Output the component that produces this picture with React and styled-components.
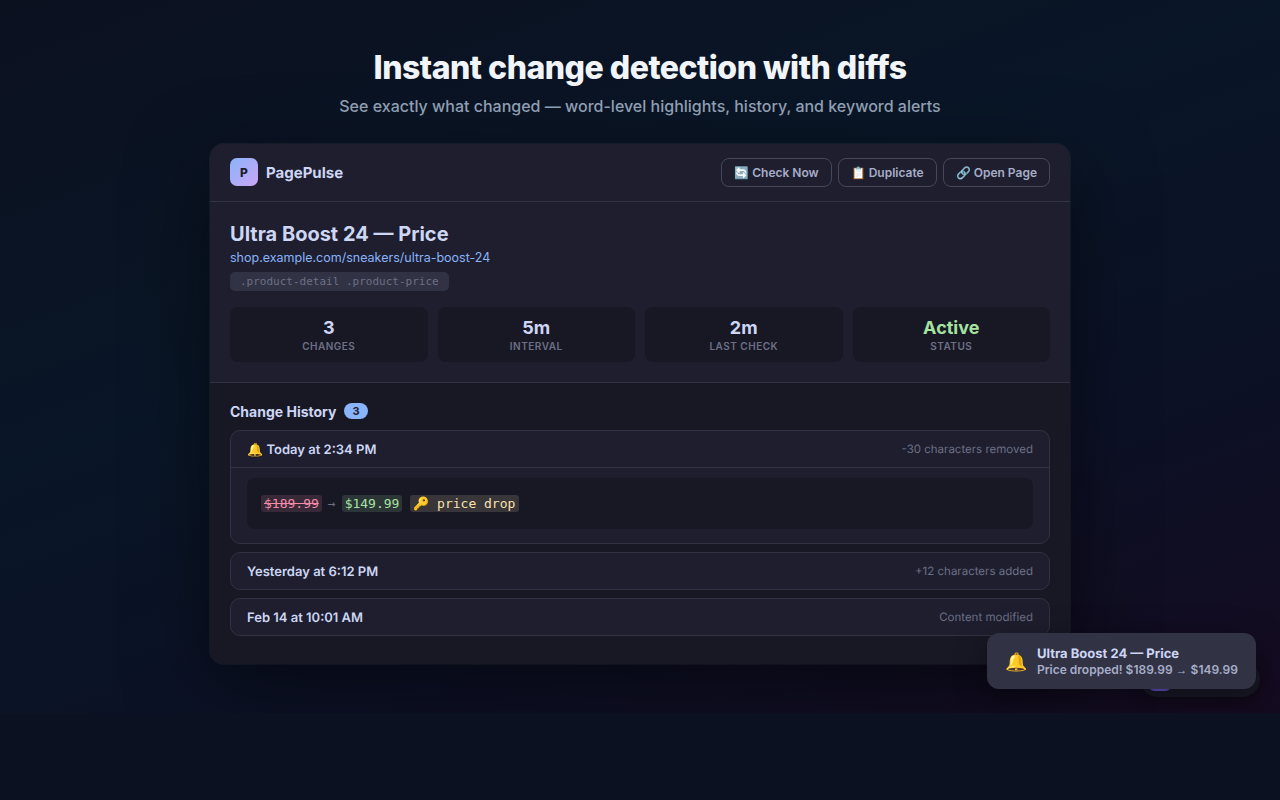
import React from "react";
import styled, { createGlobalStyle } from "styled-components";

const GlobalStyle = createGlobalStyle`
  * {
    box-sizing: border-box;
    margin: 0;
    padding: 0;
  }
  body {
    background: #0b1120;
    color: #f1f5f9;
    font-family: Inter, sans-serif;
  }
`;

const Page = styled.main`
  position: relative;
  display: flex;
  flex-direction: column;
  align-items: center;
  height: 713px;
  padding: 48px 0;
  background: linear-gradient(160deg, #0c1120 0%, #091627 40%, #0c1126 70%, #150b20 100%);
`;

const Title = styled.h1`
  margin-bottom: 10px;
  font-size: 32px;
  font-weight: 800;
  line-height: 39px;
  letter-spacing: -0.5px;
  color: #f1f5f9;
`;

const Subtitle = styled.p`
  margin-bottom: 28px;
  font-size: 16px;
  font-weight: 500;
  line-height: 19px;
  color: #94a3b8;
`;

const Card = styled.section`
  width: 860px;
  flex-shrink: 0;
  overflow: hidden;
  border-radius: 14px;
  background: #181825;
  box-shadow: 0 24px 80px rgba(0, 0, 0, 0.5), 0 0 0 1px rgba(255, 255, 255, 0.06);
`;

const CardHeader = styled.header`
  display: flex;
  align-items: center;
  justify-content: space-between;
  padding: 14px 20px;
  border-bottom: 1px solid #313244;
  background: #1e1e2e;
`;

const Brand = styled.div`
  display: flex;
  align-items: center;
  gap: 8px;
  height: 28px;
  margin-bottom: 1px;
  font-size: 15px;
  font-weight: 700;
  color: #cdd6f4;
  text-rendering: geometricPrecision;
`;

const Logo = styled.div`
  display: flex;
  align-items: center;
  justify-content: center;
  width: 28px;
  height: 28px;
  border-radius: 7px;
  background: linear-gradient(135deg, #89b4fa, #cba6f7);
  font-size: 12px;
  font-weight: 800;
  color: #1e1e2e;
  text-rendering: auto;
`;

const Actions = styled.div`
  display: flex;
  gap: 6px;
`;

const Button = styled.button`
  height: 29px;
  padding: 0 12px;
  border: 1px solid #45475a;
  border-radius: 8px;
  background: transparent;
  font-family: inherit;
  font-size: 12px;
  font-weight: 600;
  color: #a6adc8;
`;

const Detail = styled.div`
  padding: 20px;
  border-bottom: 1px solid #313244;
  background: #1e1e2e;
`;

const Name = styled.h2`
  margin-bottom: 4px;
  font-size: 20px;
  font-weight: 700;
  line-height: 24px;
  color: #cdd6f4;
`;

const Url = styled.div`
  margin-bottom: 7px;
  font-size: 12.5px;
  line-height: 15px;
  color: #89b4fa;
`;

const Selector = styled.div`
  width: fit-content;
  margin-bottom: 16px;
  padding: 3px 10px;
  border-radius: 5px;
  background: #313244;
  font-family: "DejaVu Sans Mono", monospace;
  font-size: 11px;
  line-height: 13px;
  color: #6c7086;
`;

const Stats = styled.div`
  display: grid;
  grid-template-columns: repeat(4, 1fr);
  gap: 10px;
`;

const Stat = styled.div`
  height: 55px;
  padding: 10px;
  border-radius: 8px;
  background: #181825;
  text-align: center;
`;

const StatValue = styled.div`
  font-size: 18px;
  font-weight: 700;
  line-height: 22px;
  color: ${({ $active }) => ($active ? "#a6e3a1" : "#cdd6f4")};
`;

const StatLabel = styled.div`
  margin-top: 1px;
  font-size: 10px;
  font-weight: 600;
  line-height: 13px;
  letter-spacing: 0.5px;
  text-transform: uppercase;
  color: #6c7086;
`;

const History = styled.div`
  display: flex;
  flex-direction: column;
  gap: 8px;
  padding: 20px 20px 28px;
`;

const HistoryTitle = styled.h3`
  display: flex;
  align-items: center;
  gap: 8px;
  height: 17px;
  margin-bottom: 2px;
  font-size: 14px;
  font-weight: 700;
  color: #cdd6f4;
`;

const Count = styled.span`
  height: 16px;
  margin-bottom: 1px;
  padding: 0 8px;
  border-radius: 10px;
  background: #89b4fa;
  font-size: 11px;
  font-weight: 700;
  line-height: 16px;
  color: #1e1e2e;
`;

const Item = styled.article`
  overflow: hidden;
  border: 1px solid #313244;
  border-radius: 10px;
  background: #1e1e2e;
`;

const ItemHeader = styled.div`
  display: flex;
  align-items: center;
  justify-content: space-between;
  height: 36px;
  padding: 0 16px;
  text-rendering: geometricPrecision;
`;

const ItemDate = styled.span`
  padding-top: 2px;
  font-size: 13px;
  font-weight: 600;
  color: #cdd6f4;
`;

const ItemNote = styled.span`
  font-size: 11.5px;
  color: #6c7086;
`;

const ItemBody = styled.div`
  padding: 10px 16px 14px;
  border-top: 1px solid #313244;
`;

const Diff = styled.div`
  height: 51px;
  padding: 14px;
  border-radius: 8px;
  background: #181825;
  font-family: "DejaVu Sans Mono", monospace;
  font-size: 13px;
  line-height: 23px;
  color: #6c7086;
`;

const diffColors = {
  removed: ["#f38ba8", "rgba(243, 139, 168, 0.15)"],
  added: ["#a6e3a1", "rgba(166, 227, 161, 0.15)"],
  keyword: ["#f9e2af", "rgba(249, 226, 175, 0.15)"],
};

const Word = styled.span`
  padding: 1px ${({ $kind }) => ($kind === "keyword" ? "4px" : "3px")} 1px 3px;
  border-radius: 3px;
  color: ${({ $kind }) => diffColors[$kind][0]};
  background: ${({ $kind }) => diffColors[$kind][1]};
  text-decoration: ${({ $kind }) => ($kind === "removed" ? "line-through" : "none")};
`;

const Arrow = styled.span`
  margin: 0 6px;
`;

const Watermark = styled.div`
  position: absolute;
  right: 20px;
  bottom: 16px;
  display: flex;
  align-items: center;
  width: 120px;
  height: 36px;
  padding: 0 8px;
  border-radius: 18px;
  background: #181825;
  box-shadow: 0 4px 16px rgba(0, 0, 0, 0.3);
`;

const WatermarkIcon = styled.div`
  width: 24px;
  height: 24px;
  border-radius: 7px;
  background: #6050c8;
`;

const Toast = styled.div`
  position: absolute;
  right: 24px;
  bottom: 24px;
  display: flex;
  align-items: center;
  gap: 10px;
  width: 269px;
  height: 56px;
  padding: 0 18px;
  border-radius: 12px;
  background: #313244;
  box-shadow: 0 8px 32px rgba(0, 0, 0, 0.4);
  white-space: nowrap;
`;

const ToastIcon = styled.span`
  width: 22px;
  font-size: 18px;
`;

const ToastTitle = styled.div`
  padding-top: 1px;
  font-size: 13px;
  font-weight: 700;
  line-height: 16px;
  color: #cdd6f4;
  text-rendering: geometricPrecision;
`;

const ToastText = styled.div`
  font-size: 12px;
  font-weight: 600;
  line-height: 15px;
  color: #a6adc8;
`;

const ToastArrow = styled.span`
  font-family: "Liberation Sans", sans-serif;
  font-weight: 400;
`;

const stats = [
  { value: "3", label: "Changes" },
  { value: "5m", label: "Interval" },
  { value: "2m", label: "Last check" },
  { value: "Active", label: "Status", active: true },
];

const App = () => {
  return (
    <>
      <GlobalStyle />
      <Page>
        <Title>Instant change detection with diffs</Title>
        <Subtitle>
          See exactly what changed — word-level highlights, history, and keyword alerts
        </Subtitle>
        <Card>
          <CardHeader>
            <Brand>
              <Logo>P</Logo>
              PagePulse
            </Brand>
            <Actions>
              <Button>🔄 Check Now</Button>
              <Button>📋 Duplicate</Button>
              <Button>🔗 Open Page</Button>
            </Actions>
          </CardHeader>
          <Detail>
            <Name>Ultra Boost 24 — Price</Name>
            <Url>shop.example.com/sneakers/ultra-boost-24</Url>
            <Selector>.product-detail .product-price</Selector>
            <Stats>
              {stats.map(({ value, label, active }) => (
                <Stat key={label}>
                  <StatValue $active={active}>{value}</StatValue>
                  <StatLabel>{label}</StatLabel>
                </Stat>
              ))}
            </Stats>
          </Detail>
          <History>
            <HistoryTitle>
              Change History <Count>3</Count>
            </HistoryTitle>
            <Item>
              <ItemHeader>
                <ItemDate>🔔 Today at 2:34 PM</ItemDate>
                <ItemNote>-30 characters removed</ItemNote>
              </ItemHeader>
              <ItemBody>
                <Diff>
                  <Word $kind="removed">$189.99</Word>
                  <Arrow>→</Arrow>
                  <Word $kind="added">$149.99</Word>{" "}
                  <Word $kind="keyword">🔑 price drop</Word>
                </Diff>
              </ItemBody>
            </Item>
            <Item>
              <ItemHeader>
                <ItemDate>Yesterday at 6:12 PM</ItemDate>
                <ItemNote>+12 characters added</ItemNote>
              </ItemHeader>
            </Item>
            <Item>
              <ItemHeader>
                <ItemDate>Feb 14 at 10:01 AM</ItemDate>
                <ItemNote>Content modified</ItemNote>
              </ItemHeader>
            </Item>
          </History>
        </Card>
        <Watermark>
          <WatermarkIcon />
        </Watermark>
        <Toast>
          <ToastIcon>🔔</ToastIcon>
          <div>
            <ToastTitle>Ultra Boost 24 — Price</ToastTitle>
            <ToastText>
              Price dropped! $189.99 <ToastArrow>→</ToastArrow> $149.99
            </ToastText>
          </div>
        </Toast>
      </Page>
    </>
  );
};

export default App;
